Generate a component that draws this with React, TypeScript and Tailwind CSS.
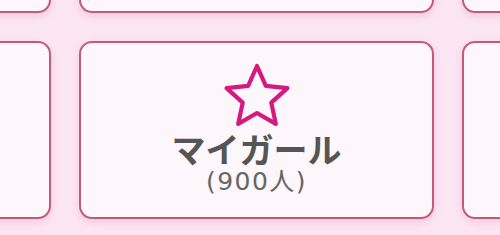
const cards = [
  { name: "", count: "" },
  { name: "", count: "" },
  { name: "", count: "" },
  { name: "", count: "" },
  { name: "マイガール", count: "(900人)" },
  { name: "", count: "" },
];

function StarIcon() {
  const cx = 34, cy = 36, R = 32, r = 15;
  const pts = Array.from({ length: 10 }, (_, i) => {
    const a = (Math.PI / 5) * i - Math.PI / 2;
    const rad = i % 2 === 0 ? R : r;
    return `${(cx + rad * Math.cos(a)).toFixed(2)},${(cy + rad * Math.sin(a)).toFixed(2)}`;
  }).join(" ");
  return (
    <svg width="68" height="66" viewBox="0 0 68 66">
      <polygon points={pts} fill="none" stroke="#d4197f" strokeWidth="4.2" strokeLinejoin="round" />
    </svg>
  );
}

export default function App() {
  return (
    <div className="w-[500px] h-[235px] overflow-hidden bg-[#fde6f3]">
      <div className="grid grid-cols-[355px_355px_355px] gap-[28px] ml-[-304px] mt-[-165px] w-max">
        {cards.map((c, i) => (
          <div
            key={i}
            className="h-[178px] rounded-[13px] border-2 border-[#c45a7a] bg-[#fdf6fb] shadow-[0_3px_8px_rgba(200,120,160,0.25)] flex flex-col items-center pt-[19px]"
          >
            {c.name && (
              <>
                <StarIcon />
                <p
                  className="mt-[4px] text-[34px] leading-[34px] font-bold text-[#555]"
                  style={{ fontFamily: '"Noto Sans CJK JP", sans-serif' }}
                >
                  {c.name}
                </p>
                <p
                  className="mt-[2px] text-[25px] leading-[28px] tracking-[1.5px] text-[#666]"
                  style={{ fontFamily: '"DejaVu Sans", "Noto Sans CJK JP", sans-serif' }}
                >
                  {c.count}
                </p>
              </>
            )}
          </div>
        ))}
      </div>
    </div>
  );
}
